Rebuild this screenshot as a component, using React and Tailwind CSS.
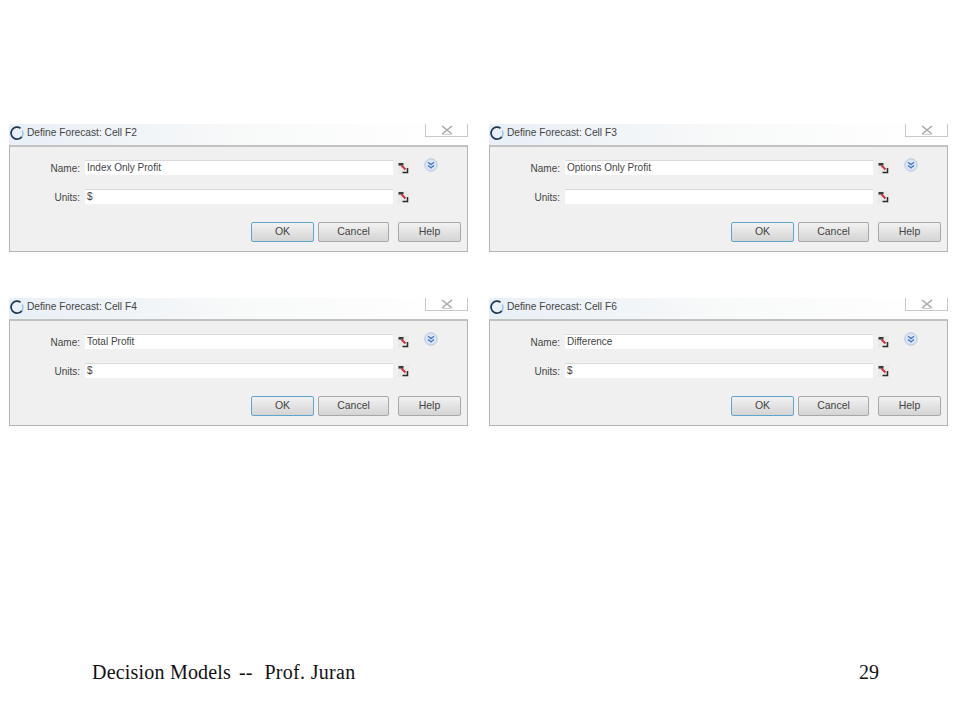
const ui = { fontFamily: '"Liberation Sans", Arial, sans-serif' };

function RefIcon() {
  return (
    <svg width="11" height="12" viewBox="0 0 11 12" className="shrink-0">
      <rect x="0" y="0" width="11" height="12" fill="#e9ece4" />
      <rect x="0.5" y="1" width="5" height="2.6" fill="#3a3a3a" />
      <path d="M3.5 3.5 L7.5 7.5" stroke="#cf3048" strokeWidth="1.9" />
      <path d="M9.5 6 V10.5 H4.5" stroke="#2c2c2c" strokeWidth="1.5" fill="none" />
    </svg>
  );
}

function Chevrons() {
  return (
    <svg width="14" height="14" viewBox="0 0 14 14" className="shrink-0">
      <circle cx="7" cy="7" r="6.2" fill="#dbe5f4" stroke="#b4c5df" />
      <path d="M4 4.2 L7 6.6 L10 4.2 M4 7.4 L7 9.8 L10 7.4" stroke="#4a78c8" strokeWidth="1.3" fill="none" />
    </svg>
  );
}

function Logo() {
  return (
    <svg width="15" height="16" viewBox="0 0 15 16" className="shrink-0">
      <path d="M11.5 3.2 A6 6 0 1 0 13 11.5" stroke="#1e3a50" strokeWidth="1.7" fill="none" />
      <path d="M13.2 5.5 A6 6 0 0 1 12.6 12" stroke="#8fc3e6" strokeWidth="1.3" fill="none" />
    </svg>
  );
}

function Field({ label, value, iconRow, className }) {
  return (
    <div className={`flex items-center ${className}`}>
      <span className="w-[70px] text-right text-[10px] leading-none text-[#444] pt-[3px] shrink-0">{label}</span>
      <div className="ml-[5px] w-[308px] h-[15px] bg-white border-t border-[#d9d9d9] flex items-center pl-[2px] text-[10px] text-[#444] leading-none">
        {value}
      </div>
      <div className="ml-[5px]"><RefIcon /></div>
      {iconRow && <div className="ml-[15px] -mt-[5px]"><Chevrons /></div>}
    </div>
  );
}

function Btn({ children, className }) {
  return (
    <div className={`h-[20px] flex items-center justify-center rounded-[2px] border text-[10.5px] text-[#444] bg-gradient-to-b from-[#f2f2f2] to-[#d4d4d4] ${className}`}>
      {children}
    </div>
  );
}

function Dialog({ cell, name, units }) {
  return (
    <div className="flex flex-col h-[128px]">
      <div className="h-[21px] flex items-start bg-gradient-to-r from-[#e8eff6] via-[#f8f9f9] to-white">
        <div className="flex items-center h-[17px]">
          <Logo />
          <span className="ml-[3px] mt-[1px] text-[10.2px] text-[#444] leading-none">Define Forecast: Cell {cell}</span>
        </div>
        <div className="ml-auto w-[43px] h-[13px] bg-white border border-t-0 border-[#c8c8c8] flex items-center justify-center">
          <svg width="14" height="10" viewBox="0 0 14 10">
            <path d="M2 1 L12 9 M12 1 L2 9" stroke="#a8a8a8" strokeWidth="1.6" />
            <path d="M3 9.5 H11" stroke="#cfcfcf" strokeWidth="1" />
          </svg>
        </div>
      </div>
      <div className="flex-1 flex flex-col bg-[#f0f0f0] border border-[#b4b4b4] border-t-2 border-t-[#c2c2c2]">
        <Field label="Name:" value={name} iconRow className="mt-[13px]" />
        <Field label="Units:" value={units} className="mt-[14px]" />
        <div className="flex mt-[18px] ml-[241px]">
          <Btn className="w-[63px] border-[#5fa6cf] border-[1.5px]">OK</Btn>
          <Btn className="w-[71px] ml-[4px] border-[#a8a8a8]">Cancel</Btn>
          <Btn className="w-[63px] ml-[9px] border-[#a8a8a8]">Help</Btn>
        </div>
      </div>
    </div>
  );
}

export default function App() {
  return (
    <div className="w-[960px] h-[720px] bg-white flex flex-col overflow-hidden" style={ui}>
      <div className="grid grid-cols-[459px_459px] gap-x-[21px] gap-y-[46px] pl-[9px] pt-[124px]">
        <Dialog cell="F2" name="Index Only Profit" units="$" />
        <Dialog cell="F3" name="Options Only Profit" units="" />
        <Dialog cell="F4" name="Total Profit" units="$" />
        <Dialog cell="F6" name="Difference" units="$" />
      </div>
      <div
        className="mt-[234px] ml-[92px] w-[787px] flex justify-between text-[20px] leading-[24px] text-[#111] whitespace-pre"
        style={{ fontFamily: '"Liberation Serif", "Times New Roman", serif' }}
      >
        <span>
          <span className="tracking-[0.2px]">Decision Models</span>
          <span className="ml-[8px]">--</span>
          <span className="ml-[12px] tracking-[0.3px]">Prof. Juran</span>
        </span>
        <span>29</span>
      </div>
    </div>
  );
}
